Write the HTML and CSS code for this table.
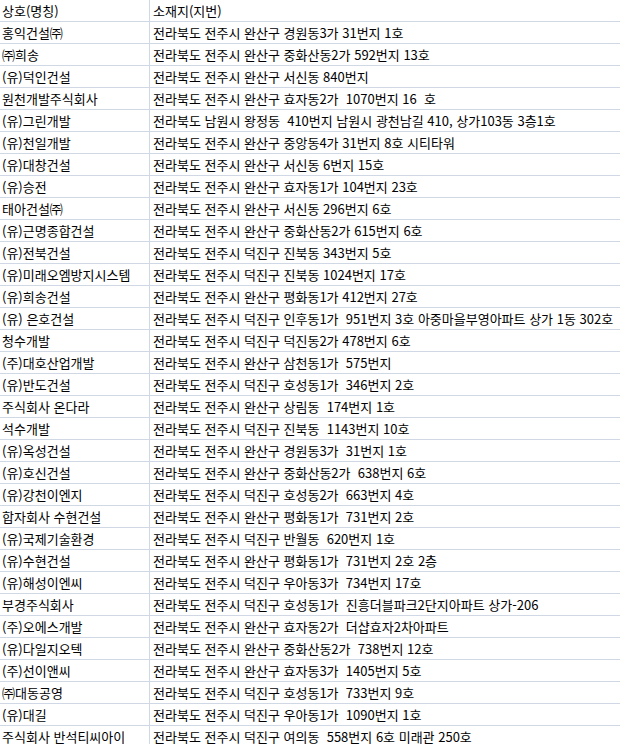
FILE: index.html
```html
<!DOCTYPE html>
<html lang="ko">
<head>
<meta charset="utf-8">
<title>상호 소재지</title>
<link rel="stylesheet" href="styles.css">
</head>
<body>
<div class="sheet">
  <div class="cell name">상호(명칭)</div><div class="cell addr">소재지(지번)</div>
  <div class="cell name">홍익건설㈜</div><div class="cell addr">전라북도 전주시 완산구 경원동3가 31번지 1호</div>
  <div class="cell name">㈜희송</div><div class="cell addr">전라북도 전주시 완산구 중화산동2가 592번지 13호</div>
  <div class="cell name">(유)덕인건설</div><div class="cell addr">전라북도 전주시 완산구 서신동 840번지</div>
  <div class="cell name">원천개발주식회사</div><div class="cell addr">전라북도 전주시 완산구 효자동2가  1070번지 16  호</div>
  <div class="cell name">(유)그린개발</div><div class="cell addr">전라북도 남원시 왕정동  410번지 남원시 광천남길 410, 상가103동 3층1호</div>
  <div class="cell name">(유)천일개발</div><div class="cell addr">전라북도 전주시 완산구 중앙동4가 31번지 8호 시티타워</div>
  <div class="cell name">(유)대창건설</div><div class="cell addr">전라북도 전주시 완산구 서신동 6번지 15호</div>
  <div class="cell name">(유)승전</div><div class="cell addr">전라북도 전주시 완산구 효자동1가 104번지 23호</div>
  <div class="cell name">태아건설㈜</div><div class="cell addr">전라북도 전주시 완산구 서신동 296번지 6호</div>
  <div class="cell name">(유)근명종합건설</div><div class="cell addr">전라북도 전주시 완산구 중화산동2가 615번지 6호</div>
  <div class="cell name">(유)전북건설</div><div class="cell addr">전라북도 전주시 덕진구 진북동 343번지 5호</div>
  <div class="cell name">(유)미래오엠방지시스템</div><div class="cell addr">전라북도 전주시 덕진구 진북동 1024번지 17호</div>
  <div class="cell name">(유)희송건설</div><div class="cell addr">전라북도 전주시 완산구 평화동1가 412번지 27호</div>
  <div class="cell name">(유) 은호건설</div><div class="cell addr">전라북도 전주시 덕진구 인후동1가  951번지 3호 아중마을부영아파트 상가 1동 302호</div>
  <div class="cell name">청수개발</div><div class="cell addr">전라북도 전주시 덕진구 덕진동2가 478번지 6호</div>
  <div class="cell name">(주)대호산업개발</div><div class="cell addr">전라북도 전주시 완산구 삼천동1가  575번지</div>
  <div class="cell name">(유)반도건설</div><div class="cell addr">전라북도 전주시 덕진구 호성동1가  346번지 2호</div>
  <div class="cell name">주식회사 온다라</div><div class="cell addr">전라북도 전주시 완산구 상림동  174번지 1호</div>
  <div class="cell name">석수개발</div><div class="cell addr">전라북도 전주시 덕진구 진북동  1143번지 10호</div>
  <div class="cell name">(유)옥성건설</div><div class="cell addr">전라북도 전주시 완산구 경원동3가  31번지 1호</div>
  <div class="cell name">(유)호신건설</div><div class="cell addr">전라북도 전주시 완산구 중화산동2가  638번지 6호</div>
  <div class="cell name">(유)강천이엔지</div><div class="cell addr">전라북도 전주시 덕진구 호성동2가  663번지 4호</div>
  <div class="cell name">합자회사 수현건설</div><div class="cell addr">전라북도 전주시 완산구 평화동1가  731번지 2호</div>
  <div class="cell name">(유)국제기술환경</div><div class="cell addr">전라북도 전주시 덕진구 반월동  620번지 1호</div>
  <div class="cell name">(유)수현건설</div><div class="cell addr">전라북도 전주시 완산구 평화동1가  731번지 2호 2층</div>
  <div class="cell name">(유)해성이엔씨</div><div class="cell addr">전라북도 전주시 덕진구 우아동3가  734번지 17호</div>
  <div class="cell name">부경주식회사</div><div class="cell addr">전라북도 전주시 덕진구 호성동1가  진흥더블파크2단지아파트 상가-206</div>
  <div class="cell name">(주)오에스개발</div><div class="cell addr">전라북도 전주시 완산구 효자동2가  더샵효자2차아파트</div>
  <div class="cell name">(유)다일지오텍</div><div class="cell addr">전라북도 전주시 완산구 중화산동2가  738번지 12호</div>
  <div class="cell name">(주)선이앤씨</div><div class="cell addr">전라북도 전주시 완산구 효자동3가  1405번지 5호</div>
  <div class="cell name">㈜대동공영</div><div class="cell addr">전라북도 전주시 덕진구 호성동1가  733번지 9호</div>
  <div class="cell name">(유)대길</div><div class="cell addr">전라북도 전주시 덕진구 우아동1가  1090번지 1호</div>
  <div class="cell name">주식회사 반석티씨아이</div><div class="cell addr">전라북도 전주시 덕진구 여의동  558번지 6호 미래관 250호</div>
</div>
</body>
</html>
```

FILE: styles.css
```css
html, body {
  margin: 0;
  padding: 0;
  background: #ffffff;
}

body {
  width: 620px;
  height: 744px;
  overflow: hidden;
  font-family: "Noto Sans CJK KR", "Noto Sans", sans-serif;
  font-size: 13px;
  color: #000000;
}

.sheet {
  display: grid;
  grid-template-columns: 150px 470px;
  grid-auto-rows: 22px;
}

.cell {
  box-sizing: border-box;
  height: 22px;
  line-height: 21px;
  border-bottom: 1px solid #d0d7e5;
  white-space: pre;
  overflow: hidden;
}

.name {
  padding-left: 2px;
  border-right: 1px solid #d0d7e5;
}

.addr {
  padding-left: 3px;
}
```
